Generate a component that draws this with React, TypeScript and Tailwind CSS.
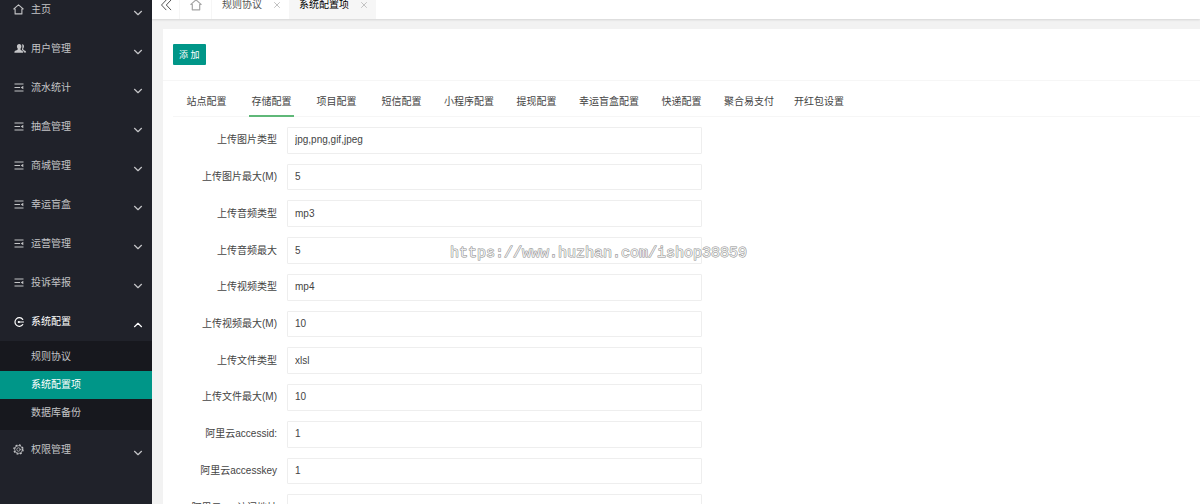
import type { ReactNode } from 'react';

const line = {
  fill: 'none',
  stroke: 'currentColor',
  strokeLinecap: 'round' as const,
  strokeLinejoin: 'round' as const,
};

function HomeIcon({ className }: { className: string }) {
  return (
    <svg viewBox="0 0 12 12" className={className} {...line}>
      <path d="M2.3 5.400H.9L6 .9l5.100 4.500H9.700v5.400H2.300z" strokeWidth="1.200" />
    </svg>
  );
}

function UsersIcon() {
  return (
    <svg viewBox="-3 0 13 11" className="h-[11px] w-[13px] overflow-visible" fill="currentColor">
      <path d="M6.900 1.200c1.300-.1 2.100.6 2.100 2 0 1-.3 1.700-.8 2.200 0 1.200.4 1.700 1.400 2.100 1 .4 1.500.9 1.500 2H8.900c-.1-1.500-.9-2.100-1.900-2.600-.2-.7.4-1.400.4-3.200 0-1-.2-1.900-.5-2.500z" />
      <path d="M4.200.9c1.400 0 2.200.9 2.200 2.400 0 1.100-.4 1.900-.9 2.400 0 1.100.4 1.500 1.300 1.900.9.400 1.300.9 1.300 2.100H-.6c0-1.200.4-1.700 1.500-2.100.9-.4 1.900-.8 1.900-1.900-.5-.5-.9-1.300-.9-2.400C1.900 1.800 2.800.9 4.200.9z" />
    </svg>
  );
}

function ListIcon() {
  return (
    <svg viewBox="0 0 10 9" className="h-[9px] w-[10px]" {...line}>
      <path d="M.5 1h9M.5 4.500h5.500M.5 8h9" strokeLinecap="butt" strokeWidth="1.200" />
      <path d="M9.300 2.800v3.400L6.700 4.500z" fill="currentColor" stroke="none" />
    </svg>
  );
}

function ConfigIcon() {
  return (
    <svg viewBox="0 0 10 10" className="size-[10px]" {...line}>
      <path d="M8.700 2.400A4.300 4.300 0 1 0 8.700 7.600" strokeWidth="1.200" />
      <path d="M4.800 5h4.700" />
      <circle cx="4.800" cy="5" r="1.100" fill="currentColor" stroke="none" />
    </svg>
  );
}

function GearIcon() {
  return (
    <svg viewBox="0 0 12 12" className="size-[11px]" {...line}>
      <circle cx="6" cy="6" r="5" strokeWidth="1.400" strokeDasharray="2 1.927" strokeLinecap="butt" />
      <circle cx="6" cy="6" r="4.200" strokeWidth=".9" />
      <circle cx="6" cy="6" r="1.900" strokeWidth=".8" />
    </svg>
  );
}

function Chevron({ up = false }: { up?: boolean }) {
  return (
    <svg viewBox="0 0 10 6" className="mt-[7px] h-[6px] w-[10px]" {...line}>
      <path d={up ? 'M1.500 4.700 5 1.300l3.500 3.400' : 'M1.500 1.300 5 4.700l3.500-3.400'} strokeWidth="1.200" />
    </svg>
  );
}

function MenuRow({ icon, label, open = false }: { icon: ReactNode; label: string; open?: boolean }) {
  return (
    <button
      type="button"
      aria-expanded={open}
      className={`flex h-[39px] w-full items-center pr-[9px] pl-3 text-left ${open ? 'text-white' : 'text-[#c4c5c7]'}`}
    >
      <span className="mr-1.5 flex w-[13px] justify-center">{icon}</span>
      <span className="flex-1">{label}</span>
      <Chevron up={open} />
    </button>
  );
}

const listMenus = ['流水统计', '抽盒管理', '商城管理', '幸运盲盒', '运营管理', '投诉举报'];
const subMenus = ['规则协议', '系统配置项', '数据库备份'];
const tabs = ['站点配置', '存储配置', '项目配置', '短信配置', '小程序配置', '提现配置', '幸运盲盒配置', '快递配置', '聚合易支付', '开红包设置'];
const fields = [
  ['上传图片类型', 'jpg,png,gif,jpeg'],
  ['上传图片最大(M)', '5'],
  ['上传音频类型', 'mp3'],
  ['上传音频最大', '5'],
  ['上传视频类型', 'mp4'],
  ['上传视频最大(M)', '10'],
  ['上传文件类型', 'xlsl'],
  ['上传文件最大(M)', '10'],
  ['阿里云accessid:', '1'],
  ['阿里云accesskey', '1'],
  ['阿里云oss访问地址', ''],
];

function PageTab({ label, active = false }: { label: string; active?: boolean }) {
  return (
    <div className={`flex items-center gap-[11px] pr-2 pl-[10px] ${active ? 'bg-[#f6f6f6] text-black' : 'text-[#555]'}`}>
      <a href="#">{label}</a>
      <button type="button" aria-label="关闭" className="text-[#c2c2c2]">
        <svg viewBox="0 0 8 8" className="size-[8px]" {...line}>
          <path d="m1.500 1.500 5 5m0-5-5 5" />
        </svg>
      </button>
    </div>
  );
}

export default function App() {
  return (
    <div className="relative flex h-screen overflow-hidden bg-[#f2f2f2] font-['Liberation_Sans','Noto_Sans_CJK_SC',sans-serif] text-[10px] leading-[14px] text-[#444]">
      <aside className="w-[152px] shrink-0 bg-[#20222a]">
        <nav className="-mt-[10px]">
          <MenuRow icon={<HomeIcon className="size-[11px]" />} label="主页" />
          <MenuRow icon={<UsersIcon />} label="用户管理" />
          {listMenus.map((label) => (
            <MenuRow key={label} icon={<ListIcon />} label={label} />
          ))}
          <MenuRow icon={<ConfigIcon />} label="系统配置" open />
          <div className="bg-[#17181e] pt-0.5 pb-[3px]">
            {subMenus.map((label) => (
              <a
                key={label}
                href="#"
                className={`flex h-7 items-center pl-[31px] ${label === '系统配置项' ? 'bg-[#009688] text-white' : 'text-[#c4c5c7]'}`}
              >
                {label}
              </a>
            ))}
          </div>
          <MenuRow icon={<GearIcon />} label="权限管理" />
        </nav>
      </aside>

      <div className="flex min-w-0 flex-1 flex-col">
        <header className="-mt-[9px] flex h-7 shrink-0 bg-white shadow-[0_1px_2px_rgba(0,0,0,0.12)]">
          <button type="button" aria-label="收起" className="flex w-7 items-center justify-center border-r border-[#f6f6f6] text-[#555]">
            <svg viewBox="0 0 12 12" className="size-[12px]" {...line}>
              <path d="M6 1.200 1.500 6 6 10.800M10.800 1.200 6.300 6l4.500 4.800" />
            </svg>
          </button>
          <button type="button" aria-label="主页" className="flex w-8 items-center justify-center border-r border-[#f6f6f6] text-[#a5a5a5]">
            <HomeIcon className="size-[12px]" />
          </button>
          <PageTab label="规则协议" />
          <PageTab label="系统配置项" active />
        </header>

        <main className="mt-[10px] ml-[11px] flex-1 bg-white">
          <div className="border-b border-[#f6f6f6] px-[10px] py-[15px]">
            <button type="button" className="flex h-[21px] items-center rounded-[1px] bg-[#009688] px-[6px] text-[9px] text-white">
              添 加
            </button>
          </div>
          <div className="pl-[10px]">
            <div role="tablist" className="mt-[7px] flex gap-5 border-b border-[#f6f6f6] pl-[11px]">
              {tabs.map((label) => (
                <button
                  key={label}
                  type="button"
                  role="tab"
                  aria-selected={label === '存储配置'}
                  className={`-mb-px h-[29px] min-w-[45px] border-b-2 whitespace-nowrap ${label === '存储配置' ? 'border-[#5fb878]' : 'border-transparent'}`}
                >
                  {label}
                </button>
              ))}
            </div>
            <form className="mt-[10px] grid min-h-[394px] auto-rows-fr gap-[10px]">
              {fields.map(([label, value], i) => (
                <div key={label} className="flex items-stretch gap-[10px]">
                  <label htmlFor={`field-${i}`} className="flex w-[104px] items-center justify-end whitespace-nowrap">
                    {label}
                  </label>
                  <input
                    id={`field-${i}`}
                    defaultValue={value}
                    className="w-[415px] rounded-[1px] border border-[#eee] bg-white px-[7px] outline-none"
                  />
                </div>
              ))}
            </form>
          </div>
        </main>
      </div>

      <div className="pointer-events-none absolute top-[245px] left-[450px] font-['Liberation_Mono',monospace] text-[15px] leading-[18px] text-[#eee] [-webkit-text-stroke:1px_#8c8c8c] [paint-order:stroke_fill]">
        https://www.huzhan.com/ishop38859
      </div>
    </div>
  );
}
